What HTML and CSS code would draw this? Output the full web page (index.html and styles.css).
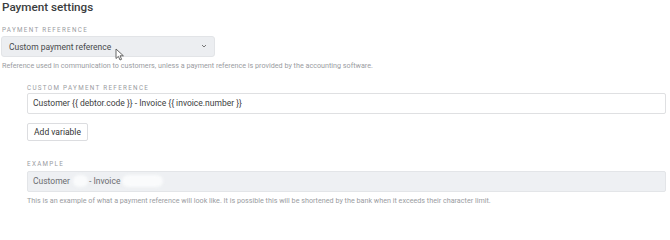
FILE: index.html
```html
<!DOCTYPE html>
<html lang="en">
<head>
<meta charset="utf-8">
<title>Payment settings</title>
<link rel="stylesheet" href="styles.css">
</head>
<body>
<div class="page">
  <h2 class="title">Payment settings</h2>
  <div class="label">PAYMENT REFERENCE</div>
  <div class="select">
    <span class="select-text">Custom payment reference</span>
    <svg class="chevron" width="6" height="4" viewBox="0 0 6 4"><path d="M1 1 L3 3 L5 1" fill="none" stroke="#777" stroke-width="1"/></svg>
    <svg class="cursor" width="10" height="13" viewBox="0 0 10 13"><path d="M1 1 L1 10.5 L3.4 8.4 L5 12 L6.6 11.3 L5 7.8 L8.4 7.8 Z" fill="#fff" stroke="#555" stroke-width="0.9" stroke-linejoin="round"/></svg>
  </div>
  <div class="help">Reference used in communication to customers, unless a payment reference is provided by the accounting software.</div>

  <div class="sub">
    <div class="label label-sub">CUSTOM PAYMENT REFERENCE</div>
    <div class="input">Customer {{ debtor.code }} - Invoice {{ invoice.number }}</div>
    <div class="btn-row"><button class="btn">Add variable</button></div>

    <div class="label label-example">EXAMPLE</div>
    <div class="example">
      <span>Customer</span><span class="blob blob1"></span><span>- Invoice</span><span class="blob blob2"></span>
    </div>
    <div class="help">This is an example of what a payment reference will look like. It is possible this will be shortened by the bank when it exceeds their character limit.</div>
  </div>
</div>
</body>
</html>
```

FILE: styles.css
```css
html, body {
  margin: 0;
  padding: 0;
  background: #ffffff;
}

body {
  font-family: Roboto, "Liberation Sans", Arial, sans-serif;
  color: #333;
}

.page {
  display: flex;
  flex-direction: column;
  padding: 0 4px 0 1px;
}

.title {
  margin: 0 0 11px 1px;
  font-size: 11.7px;
  line-height: 15px;
  font-weight: 500;
  color: #3b3d40;
}

.label {
  font-size: 6.3px;
  line-height: 8px;
  letter-spacing: 1.3px;
  color: #9a9c9f;
  margin-left: 1px;
  margin-bottom: 2px;
}

.select {
  position: relative;
  width: 214px;
  height: 21px;
  box-sizing: border-box;
  background: #eceef1;
  border: 1px solid #e2e4e7;
  border-radius: 3px;
  display: flex;
  align-items: center;
  justify-content: space-between;
  padding: 0 7px 0 7px;
}

.select-text {
  font-size: 8.5px;
  color: #48494c;
}

.chevron {
  display: block;
  margin-top: -1px;
}

.cursor {
  position: absolute;
  left: 113px;
  top: 11px;
}

.help {
  font-size: 7.2px;
  line-height: 9px;
  color: #9a9c9f;
  margin-top: 3.5px;
  margin-left: 1px;
  white-space: nowrap;
}

.sub {
  display: flex;
  flex-direction: column;
  margin-left: 26px;
  margin-top: 14px;
}

.label-sub {
  margin-left: 0;
  margin-bottom: 1px;
}

.input {
  height: 21px;
  box-sizing: border-box;
  border: 1px solid #dfe0e2;
  border-radius: 2px;
  background: #fff;
  font-size: 8.5px;
  line-height: 19px;
  color: #3d3e41;
  padding: 0 5px;
}

.btn-row {
  display: flex;
  margin-top: 9px;
}

.btn {
  height: 18px;
  width: 61px;
  box-sizing: border-box;
  border: 1px solid #dcdde0;
  border-radius: 2px;
  background: #fff;
  font-family: inherit;
  font-size: 8.5px;
  color: #333;
  padding: 0;
  margin: 0;
}

.label-example {
  margin-left: 0;
  margin-top: 19.5px;
  margin-bottom: 2.5px;
}

.example {
  height: 21px;
  box-sizing: border-box;
  border: 1px solid #e3e5e8;
  border-radius: 2px;
  background: #eef0f3;
  font-size: 8.5px;
  color: #6a6c70;
  padding: 0 5px;
  display: flex;
  align-items: center;
}

.blob {
  display: inline-block;
  height: 12px;
  border-radius: 7px;
  background: #fafbfc;
  filter: blur(1.5px);
}

.blob1 {
  width: 15px;
  margin: 0 1px 0 3px;
}

.blob2 {
  width: 41px;
  margin-left: 2px;
}

.example + .help {
  margin-left: 0;
  margin-top: 4px;
}
```
